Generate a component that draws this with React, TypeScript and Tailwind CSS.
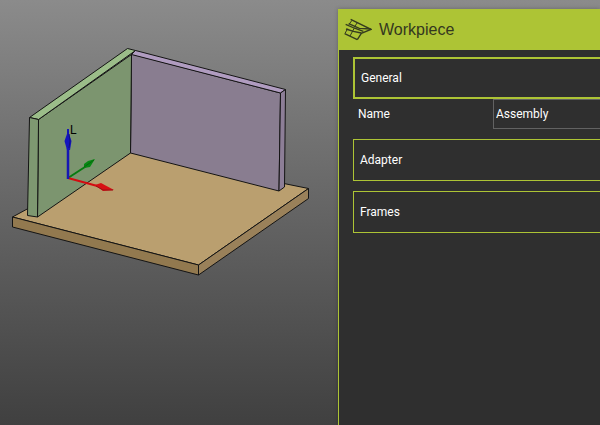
import { useState } from "react";

function WorkpieceIcon() {
  return (
    <svg
      viewBox="0 0 84 69"
      className="h-[23px] w-[28px] shrink-0"
      fill="none"
      stroke="#343b1f"
      strokeWidth="4"
      aria-hidden="true"
    >
      <path d="M20 4 L81 34 L52 46 L40 65" />
      <path d="M14 17 L46 31 L80 33" />
      <path d="M5 19 L30 30 L58 40" />
      <path d="M6 33 L28 40 L52 45" />
      <path d="M2 47 L40 65" />
      <path d="M24 7 L15 19 M40 14 L31 27" strokeWidth="3" />
      <path d="M11 32 L3 46 M31 30 L18 54" strokeWidth="3" />
    </svg>
  );
}

function Scene() {
  return (
    <svg
      viewBox="0 0 338 425"
      className="block h-auto w-full"
      role="img"
      aria-label="Assembly of three plates with coordinate frame"
    >
      <g stroke="#141414" strokeWidth="1" strokeLinejoin="round">
        {/* Base plate */}
        <polygon points="12.500,217 131,152.500 308.500,188.500 198.500,265" fill="#ba9f6f" />
        <polygon points="12.500,217 198.500,265 198.500,275 12.500,227" fill="#92794f" />
        <polygon points="198.500,265 308.500,188.500 308.500,198.500 198.500,275" fill="#9a815a" />

        {/* Rear plate */}
        <polygon points="131.500,54 280.500,93 279,191 130.500,153" fill="#897d90" />
        <polygon points="135.500,50.500 285.500,89.500 280.500,93 131.500,54.500" fill="#b09cc0" />
        <polygon points="280.500,93 285.500,89.500 284.500,187 279,191" fill="#8d7e97" />

        {/* Side plate */}
        <polygon points="38.500,119.500 131.500,54.500 130.500,153 37.500,217" fill="#7c956f" />
        <polygon points="29.500,117.500 127.500,48.500 135.500,50.500 38.500,119.500" fill="#9bbd89" />
        <polygon points="29.500,117.500 38.500,119.500 37.500,217 27.500,215.500" fill="#7e9871" />
      </g>

      {/* Coordinate frame */}
      <path d="M68 178 L88 165" stroke="#087b10" strokeWidth="2" />
      <polygon points="95,159 90,167 84,168 84,164 88,161" fill="#078813" />
      <path d="M84 167 L94 160" stroke="#06680d" strokeWidth="1" />
      <path d="M68 178 L101 187" stroke="#d40b11" strokeWidth="2" />
      <polygon points="95,185 101,183 114,190 103,191" fill="#d71014" />
      <path d="M96 186 L103 190 L113 190" fill="none" stroke="#9b1014" strokeWidth="1" />
      <path d="M68 179 L68 148" stroke="#1717b4" strokeWidth="2.500" />
      <path d="M68 136 L68 129" stroke="#1717b4" strokeWidth="2" />
      <polygon points="68,131 71.500,141 70,150 67,150 64.500,141" fill="#1414be" />
      <path d="M69 134 L70 141 L69 148" fill="none" stroke="#101080" strokeWidth="1" />
      <text x="70" y="134" fill="#000000" className="font-['Liberation_Sans',sans-serif] text-xs">
        L
      </text>
    </svg>
  );
}

function Section({ title }: { title: string }) {
  return (
    <button
      type="button"
      className="h-[42px] w-full border border-r-0 border-[#adc435] px-1.5 text-left"
    >
      {title}
    </button>
  );
}

export default function App() {
  const [name, setName] = useState("Assembly");

  return (
    <div className="flex min-h-screen overflow-hidden bg-linear-to-b from-[#8b8b8b] to-[#404040]">
      <main className="min-w-0 flex-1">
        <Scene />
      </main>

      <aside className="mt-[9px] flex w-[262px] shrink-0 flex-col bg-[#2f2f2f] font-[Roboto,sans-serif] text-xs text-white shadow-[0_0_4px_rgba(0,0,0,0.25)]">
        <header className="flex h-[41px] items-center gap-[7px] bg-[#adc435] pl-1.5">
          <WorkpieceIcon />
          <h1 className="font-['Liberation_Sans',Arial,sans-serif] text-base text-[#34371f]">
            Workpiece
          </h1>
        </header>

        <div className="flex-1 border-l border-[#adc435] pt-[7px] pl-3.5">
          <button
            type="button"
            aria-expanded="true"
            className="block h-[42px] w-full border-2 border-r-0 border-[#adc435] px-1.5 text-left"
          >
            General
          </button>
          <div className="mb-2.5 flex h-[30px] items-center">
            <label htmlFor="workpiece-name" className="w-[140px] shrink-0 pl-[5px]">
              Name
            </label>
            <input
              id="workpiece-name"
              value={name}
              onChange={(event) => setName(event.target.value)}
              className="h-full min-w-0 flex-1 border border-r-0 border-[#626262] bg-transparent px-0.5 outline-none"
            />
          </div>
          <div className="flex flex-col gap-2.5">
            <Section title="Adapter" />
            <Section title="Frames" />
          </div>
        </div>
      </aside>
    </div>
  );
}
